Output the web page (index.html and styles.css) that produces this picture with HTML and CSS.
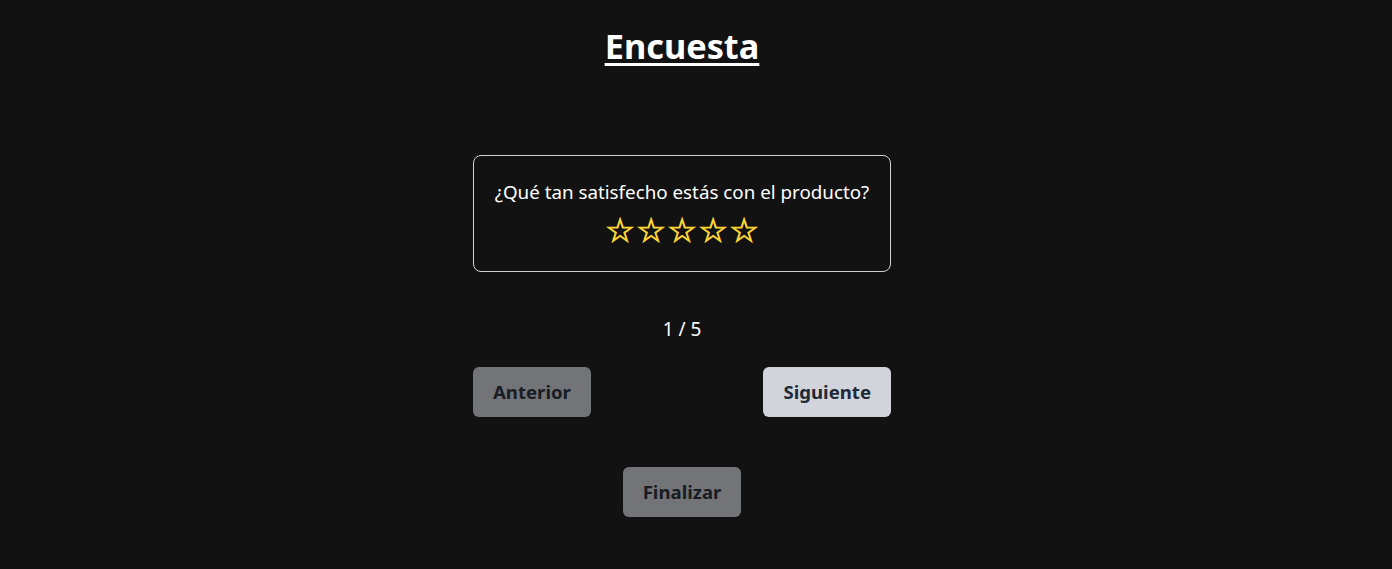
FILE: index.html
```html
<!DOCTYPE html>
<html lang="es">
<head>
<meta charset="utf-8">
<title>Encuesta</title>
<link rel="stylesheet" href="styles.css">
</head>
<body>
<main class="page">
  <h1 class="title">Encuesta</h1>
  <section class="card">
    <p class="question">¿Qué tan satisfecho estás con el producto?</p>
    <div class="stars">
      <span class="star">☆</span><span class="star">☆</span><span class="star">☆</span><span class="star">☆</span><span class="star">☆</span>
    </div>
  </section>
  <p class="counter">1 / 5</p>
  <div class="nav">
    <button class="btn" disabled>Anterior</button>
    <button class="btn">Siguiente</button>
  </div>
  <button class="btn finish" disabled>Finalizar</button>
</main>
</body>
</html>
```

FILE: styles.css
```css
* { box-sizing: border-box; }
html, body { margin: 0; background: #121212; }
body {
  font-family: "Noto Sans", "Open Sans", sans-serif;
  color: #ffffff;
  min-height: 569px;
}
.page {
  display: flex;
  flex-direction: column;
  align-items: center;
  padding: 22px 28px 0 0;
}
.title {
  margin: 0;
  font-size: 34.3px;
  font-weight: 700;
  line-height: 48px;
  text-decoration: underline;
  text-decoration-thickness: 3px;
  text-underline-offset: 4px;
}
.card {
  margin-top: 85px;
  width: 418px;
  height: 117px;
  border: 1px solid #d4d4d8;
  border-radius: 8px;
  display: flex;
  flex-direction: column;
  align-items: center;
  padding-top: 23px;
}
.question {
  margin: 0;
  font-size: 18.8px;
  line-height: 26px;
}
.stars {
  display: flex;
  margin-top: 7px;
}
.star {
  color: #fcd535;
  font-family: "DejaVu Sans", sans-serif;
  font-size: 33px;
  line-height: 38px;
  width: 31px;
  text-align: center;
  -webkit-text-stroke: 0.9px #fcd535;
}
.counter {
  margin: 44px 0 0;
  font-size: 19px;
  line-height: 26px;
}
.nav {
  margin-top: 25px;
  width: 418px;
  display: flex;
  justify-content: space-between;
}
.btn {
  font-family: inherit;
  font-size: 18.6px;
  font-weight: 700;
  line-height: 26px;
  padding: 12px 20px;
  border: none;
  border-radius: 6px;
  background: #d1d5db;
  color: #1f2937;
  height: 50px;
}
.btn:disabled { opacity: 0.5; }
.finish { margin-top: 50px; }
```
